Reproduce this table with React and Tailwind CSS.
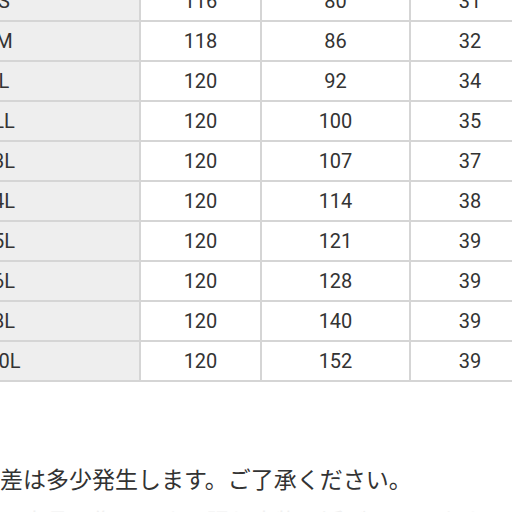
import React from 'react';

const ROWS = [
  ['S', 116, 80, 31],
  ['M', 118, 86, 32],
  ['L', 120, 92, 34],
  ['LL', 120, 100, 35],
  ['3L', 120, 107, 37],
  ['4L', 120, 114, 38],
  ['5L', 120, 121, 39],
  ['6L', 120, 128, 39],
  ['8L', 120, 140, 39],
  ['10L', 120, 152, 39],
];

const cell = 'h-10 flex items-center justify-center border-b-2 border-r-2 border-[#d5d5d5]';

export default function App() {
  return (
    <div className="w-[512px] h-[512px] overflow-hidden bg-white text-[#333]">
      {/* size table, cropped on the left and top */}
      <div
        className="grid grid-cols-[272px_121px_149px_120px] w-max -mt-[18px] -ml-[131px] text-[20px]"
        style={{ fontFamily: 'Roboto, "Liberation Sans", sans-serif' }}
      >
        {ROWS.map(([size, a, b, c]) => (
          <React.Fragment key={size}>
            <div className={`${cell} bg-[#eeeeee]`}>{size}</div>
            <div className={cell}>{a}</div>
            <div className={cell}>{b}</div>
            <div className={cell}>{c}</div>
          </React.Fragment>
        ))}
      </div>

      <p
        className="mt-[85px] text-[23px] leading-[23px] whitespace-nowrap"
        style={{ fontFamily: '"Noto Sans CJK JP", "Noto Sans", sans-serif' }}
      >
        差は多少発生します。ご了承ください。
      </p>
      <p
        className="mt-[19px] text-[23px] leading-[23px] whitespace-nowrap text-[#f0f0f0]"
        style={{ fontFamily: '"Noto Sans CJK JP", "Noto Sans", sans-serif' }}
      >
        ※商品画像はできる限り実物に近づけています。
      </p>
    </div>
  );
}
